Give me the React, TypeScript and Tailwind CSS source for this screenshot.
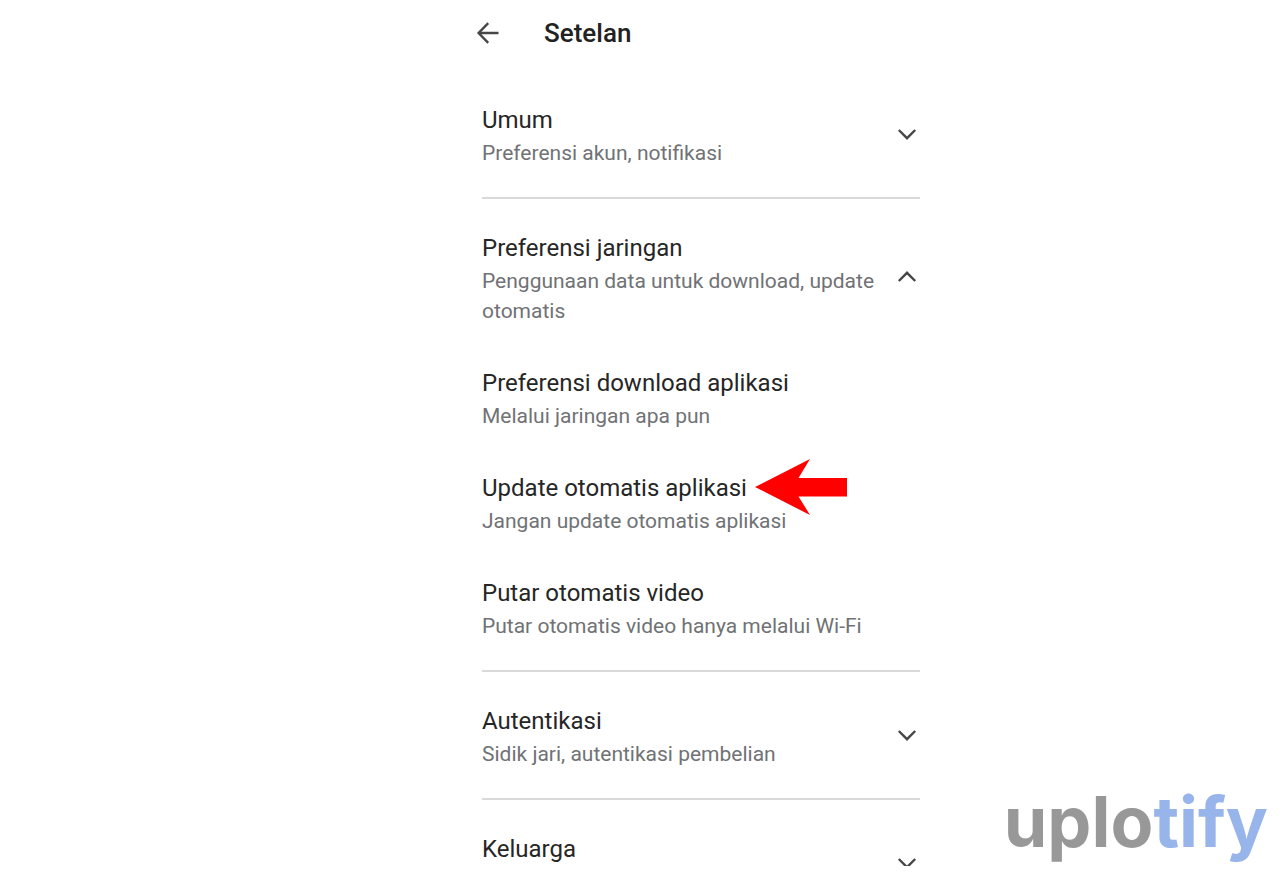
import { useState } from 'react';

interface SettingItem {
  title: string;
  value: string;
  marked?: boolean;
}

interface SettingSection {
  title: string;
  description?: string;
  items?: SettingItem[];
}

const sections: SettingSection[] = [
  { title: 'Umum', description: 'Preferensi akun, notifikasi' },
  {
    title: 'Preferensi jaringan',
    description: 'Penggunaan data untuk download, update otomatis',
    items: [
      { title: 'Preferensi download aplikasi', value: 'Melalui jaringan apa pun' },
      {
        title: 'Update otomatis aplikasi',
        value: 'Jangan update otomatis aplikasi',
        marked: true,
      },
      { title: 'Putar otomatis video', value: 'Putar otomatis video hanya melalui Wi-Fi' },
    ],
  },
  { title: 'Autentikasi', description: 'Sidik jari, autentikasi pembelian' },
  { title: 'Keluarga' },
];

const BackIcon = () => (
  <svg
    viewBox="0 0 24 24"
    className="size-6"
    fill="none"
    stroke="currentColor"
    strokeWidth="2.4"
    aria-hidden="true"
  >
    <path d="M22.500 12H3M12.200 2.200L2.600 12l9.600 9.800" />
  </svg>
);

const Chevron = ({ up }: { up: boolean }) => (
  <svg
    viewBox="0 0 24 24"
    className="size-6 shrink-0 text-[#474747]"
    fill="none"
    stroke="currentColor"
    strokeWidth="2.4"
    aria-hidden="true"
  >
    <path d={up ? 'M3.8 15l8.2-8.2 8.2 8.2' : 'M3.8 7l8.2 8.2L20.2 7'} />
  </svg>
);

const PointerArrow = () => (
  <svg
    viewBox="0 0 92 56"
    className="absolute -top-[11px] left-[273px] h-14 w-[92px]"
    aria-hidden="true"
  >
    <path d="M0 28L55 0L43.5 19H92V37.5H43.5L55 56Z" fill="#fe0000" />
  </svg>
);

const RowText = ({ title, text }: { title: string; text?: string }) => (
  <span className="block min-h-[66px] min-w-0 flex-1">
    <span className="block text-2xl leading-9 text-[#262626]">{title}</span>
    {text && (
      <span className="block text-[21px] leading-[30px] text-[#707275]">{text}</span>
    )}
  </span>
);

const Section = ({ title, description, items = [] }: SettingSection) => {
  const [open, setOpen] = useState(items.length > 0);

  return (
    <section className="border-b-2 border-[#d9d9d9] pt-[31px] pb-[29px]">
      <button
        type="button"
        aria-expanded={open}
        onClick={() => setOpen(!open)}
        className="flex w-full items-center gap-4 pr-px text-left"
      >
        <RowText title={title} text={description} />
        <Chevron up={open} />
      </button>
      {open &&
        items.map((item) => (
          <button
            key={item.title}
            type="button"
            className="relative mt-[39px] flex w-full text-left"
          >
            <RowText title={item.title} text={item.value} />
            {item.marked && <PointerArrow />}
          </button>
        ))}
    </section>
  );
};

const App = () => (
  <div className="h-screen bg-white pb-2 font-['Roboto',sans-serif]">
    <div className="h-full overflow-hidden">
      <main className="mx-auto w-full max-w-[560px] pl-[122px]">
        <header className="-ml-1.5 flex h-[71px] items-center gap-11 pb-[5px]">
          <button type="button" aria-label="Kembali" className="text-[#474747]">
            <BackIcon />
          </button>
          <h1 className="text-[26px] font-medium text-[#222]">Setelan</h1>
        </header>
        {sections.map((section) => (
          <Section key={section.title} {...section} />
        ))}
      </main>
    </div>
    <div className="fixed right-3 bottom-3 font-['Inter',sans-serif] text-[70px] leading-[80px] font-bold text-[#989898]">
      uplo<span className="text-[#97b5ea]">tify</span>
    </div>
  </div>
);

export default App;
